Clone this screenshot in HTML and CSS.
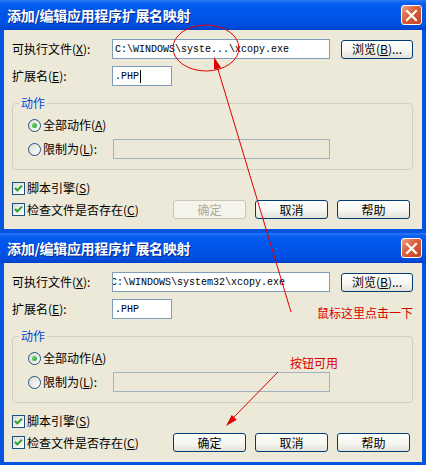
FILE: index.html
```html
<!DOCTYPE html><html lang="zh-CN">
<head>
  <meta charset="UTF-8" />
  <meta name="viewport" content="width=device-width, initial-scale=1.0"/>
  <title>添加/编辑应用程序扩展名映射</title>
  <link rel="stylesheet" href="styles.css">
</head>
<body>
<div class="dialog">
  <div class="titlebar">
    <span class="title">添加/编辑应用程序扩展名映射</span>
    <span class="close"><svg width="19" height="19" viewBox="0 0 19 19"><path d="M5 5 L14 14 M14 5 L5 14" stroke="#fff" stroke-width="2.2" stroke-linecap="square"/></svg></span>
  </div>
  <div class="dialog-body">
    <div class="row">
      <span class="label">可执行文件(<u>X</u>):</span>
      <div class="textbox wide">C:\WINDOWS\syste...\xcopy.exe</div>
      <button class="btn browse">浏览(<u>B</u>)...</button>
    </div>
    <div class="row row-ext">
      <span class="label">扩展名(<u>E</u>):</span>
      <div class="textbox short">.PHP<span class="caret"></span></div>
    </div>
    <fieldset class="group">
      <legend>动作</legend>
      <div class="option"><span class="radio checked"></span>全部动作(<u>A</u>)</div>
      <div class="option option-limit">
        <span class="radio-label"><span class="radio"></span>限制为(<u>L</u>):</span>
        <div class="textbox limit disabled"></div>
      </div>
    </fieldset>
    <div class="check-row first-check">
      <span class="checkbox"><svg width="11" height="11" viewBox="0 0 11 11"><path d="M2 5 L4.3 7.4 L9 2.6" stroke="#21A121" stroke-width="2" fill="none"/></svg></span>脚本引擎(<u>S</u>)
    </div>
    <div class="bottom-row">
      <div class="check-row">
        <span class="checkbox"><svg width="11" height="11" viewBox="0 0 11 11"><path d="M2 5 L4.3 7.4 L9 2.6" stroke="#21A121" stroke-width="2" fill="none"/></svg></span>检查文件是否存在(<u>C</u>)
      </div>
      <div class="buttons">
        <button class="btn" disabled>确定</button>
        <button class="btn">取消</button>
        <button class="btn">帮助</button>
      </div>
    </div>
  </div>
</div>

<div class="dialog">
  <div class="titlebar">
    <span class="title">添加/编辑应用程序扩展名映射</span>
    <span class="close"><svg width="19" height="19" viewBox="0 0 19 19"><path d="M5 5 L14 14 M14 5 L5 14" stroke="#fff" stroke-width="2.2" stroke-linecap="square"/></svg></span>
  </div>
  <div class="dialog-body">
    <div class="row">
      <span class="label">可执行文件(<u>X</u>):</span>
      <div class="textbox wide"><span class="scroll-text">C:\WINDOWS\system32\xcopy.exe</span></div>
      <button class="btn browse">浏览(<u>B</u>)...</button>
    </div>
    <div class="row row-ext">
      <span class="label">扩展名(<u>E</u>):</span>
      <div class="textbox short">.PHP</div>
    </div>
    <fieldset class="group">
      <legend>动作</legend>
      <div class="option"><span class="radio checked"></span>全部动作(<u>A</u>)</div>
      <div class="option option-limit">
        <span class="radio-label"><span class="radio"></span>限制为(<u>L</u>):</span>
        <div class="textbox limit disabled"></div>
      </div>
    </fieldset>
    <div class="check-row first-check">
      <span class="checkbox"><svg width="11" height="11" viewBox="0 0 11 11"><path d="M2 5 L4.3 7.4 L9 2.6" stroke="#21A121" stroke-width="2" fill="none"/></svg></span>脚本引擎(<u>S</u>)
    </div>
    <div class="bottom-row">
      <div class="check-row">
        <span class="checkbox"><svg width="11" height="11" viewBox="0 0 11 11"><path d="M2 5 L4.3 7.4 L9 2.6" stroke="#21A121" stroke-width="2" fill="none"/></svg></span>检查文件是否存在(<u>C</u>)
      </div>
      <div class="buttons">
        <button class="btn">确定</button>
        <button class="btn">取消</button>
        <button class="btn">帮助</button>
      </div>
    </div>
  </div>
</div>

<svg class="annotations" width="426" height="465" viewBox="0 0 426 465">
  <ellipse cx="206" cy="48" rx="33" ry="23" fill="none" stroke="#E00000" stroke-width="1"/>
  <line x1="291" y1="312" x2="217" y2="66" stroke="#E00000" stroke-width="1"/>
  <polygon points="214,57 221,67.5 214,69.5" fill="#E00000"/>
  <line x1="278" y1="372" x2="232" y2="419" stroke="#E00000" stroke-width="1"/>
  <polygon points="226,426 236.8,419.8 231.8,415" fill="#E00000"/>
</svg>
<span class="note note-click">鼠标这里点击一下</span>
<span class="note note-enabled">按钮可用</span>
</body>
</html>
```

FILE: styles.css
```css
body {
  margin: 0;
  width: 426px;
  height: 465px;
  overflow: hidden;
  position: relative;
  background: #ECE9D8;
  font-family: "Noto Sans CJK SC", sans-serif;
  font-size: 12px;
  color: #000;
}

.titlebar {
  height: 30px;
  display: flex;
  align-items: center;
  padding: 0 4px 0 7px;
  background: linear-gradient(#2A7CF8 0, #0A5FF0 3px, #0058EE 8px, #0054E8 60%, #004DDD 88%, #0040C8 100%);
  color: #fff;
}

.title {
  font-size: 14px;
  font-weight: bold;
  letter-spacing: -0.3px;
  text-shadow: 1px 1px 0 #0A2A8C;
}

.close {
  margin-left: auto;
  width: 21px;
  height: 20px;
  box-sizing: border-box;
  border: 1px solid #fff;
  border-radius: 3px;
  background: linear-gradient(135deg, #F0A084, #DA5E38 45%, #C24422);
  display: flex;
  align-items: center;
  justify-content: center;
}

.dialog-body {
  height: 203px;
  box-sizing: border-box;
  border: 4px solid #0553E1;
  border-top: 0;
  padding: 9px 9px 0 8px;
  background: #ECE9D8;
}

.row {
  display: flex;
  align-items: center;
  height: 20px;
}

.row-ext {
  margin-top: 7px;
}

.label {
  width: 100px;
  flex: none;
  line-height: 14px;
}

.textbox {
  height: 20px;
  box-sizing: border-box;
  border: 1px solid #7F9DB9;
  background: #fff;
  font-family: "Liberation Mono", monospace;
  font-size: 10px;
  padding: 0 2px;
  overflow: hidden;
  white-space: nowrap;
  display: flex;
  align-items: center;
}

.wide {
  width: 218px;
}

.short {
  width: 60px;
}

.limit {
  width: 217px;
}

.textbox.disabled {
  background: #ECE9D8;
  border-color: #A3B1C2;
}

.scroll-text {
  flex: none;
  margin-left: -4px;
}

.caret {
  width: 1px;
  height: 13px;
  background: #000;
  margin-left: 1px;
}

.btn {
  font: inherit;
  height: 19px;
  box-sizing: border-box;
  border: 1px solid #003C74;
  border-radius: 3px;
  background: linear-gradient(#FFFFFF, #F4F4F0 60%, #E3E0D6);
  color: #000;
  padding: 0;
  line-height: 16px;
}

.btn:disabled {
  border-color: #C9C7BA;
  background: #F5F4EA;
  color: #ACA899;
}

.browse {
  width: 72px;
  margin-left: 11px;
}

.group {
  margin: 10px 0 0;
  padding: 8px 0 10px 0;
  border: 1px solid #D0D0BF;
  border-radius: 4px;
  min-width: 0;
}

.group legend {
  color: #0046D5;
  padding: 0 2px;
  margin-left: 6px;
  line-height: 14px;
}

.option {
  display: flex;
  align-items: center;
  height: 14px;
  margin-left: 15px;
  line-height: 14px;
}

.option-limit {
  height: 20px;
  margin-top: 7px;
}

.radio-label {
  width: 85px;
  display: flex;
  align-items: center;
}

.radio {
  width: 13px;
  height: 13px;
  flex: none;
  box-sizing: border-box;
  border: 1px solid #1C5180;
  border-radius: 50%;
  background: linear-gradient(135deg, #DCDCD7, #FFFFFF);
  margin-right: 2px;
  position: relative;
}

.radio.checked::after {
  content: "";
  position: absolute;
  left: 3px;
  top: 3px;
  width: 5px;
  height: 5px;
  border-radius: 50%;
  background: radial-gradient(circle at 35% 35%, #6AD36A, #21A121);
}

.check-row {
  display: flex;
  align-items: center;
  height: 14px;
  line-height: 14px;
}

.first-check {
  margin-top: 11px;
}

.checkbox {
  width: 13px;
  height: 13px;
  flex: none;
  box-sizing: border-box;
  border: 1px solid #1C5180;
  background: linear-gradient(135deg, #DCDCD7, #FFFFFF);
  margin-right: 2px;
  display: flex;
  align-items: center;
  justify-content: center;
}

.bottom-row {
  display: flex;
  align-items: center;
  height: 19px;
  margin-top: 5px;
}

.buttons {
  margin-left: auto;
  margin-right: 3px;
  display: flex;
  gap: 9px;
}

.buttons .btn {
  width: 73px;
}

.annotations {
  position: absolute;
  top: 0;
  left: 0;
  pointer-events: none;
}

.note {
  position: absolute;
  color: #D80000;
  font-size: 12px;
  line-height: 14px;
  white-space: nowrap;
}

.note-click {
  left: 317px;
  top: 306px;
}

.note-enabled {
  left: 290px;
  top: 356px;
}
```
